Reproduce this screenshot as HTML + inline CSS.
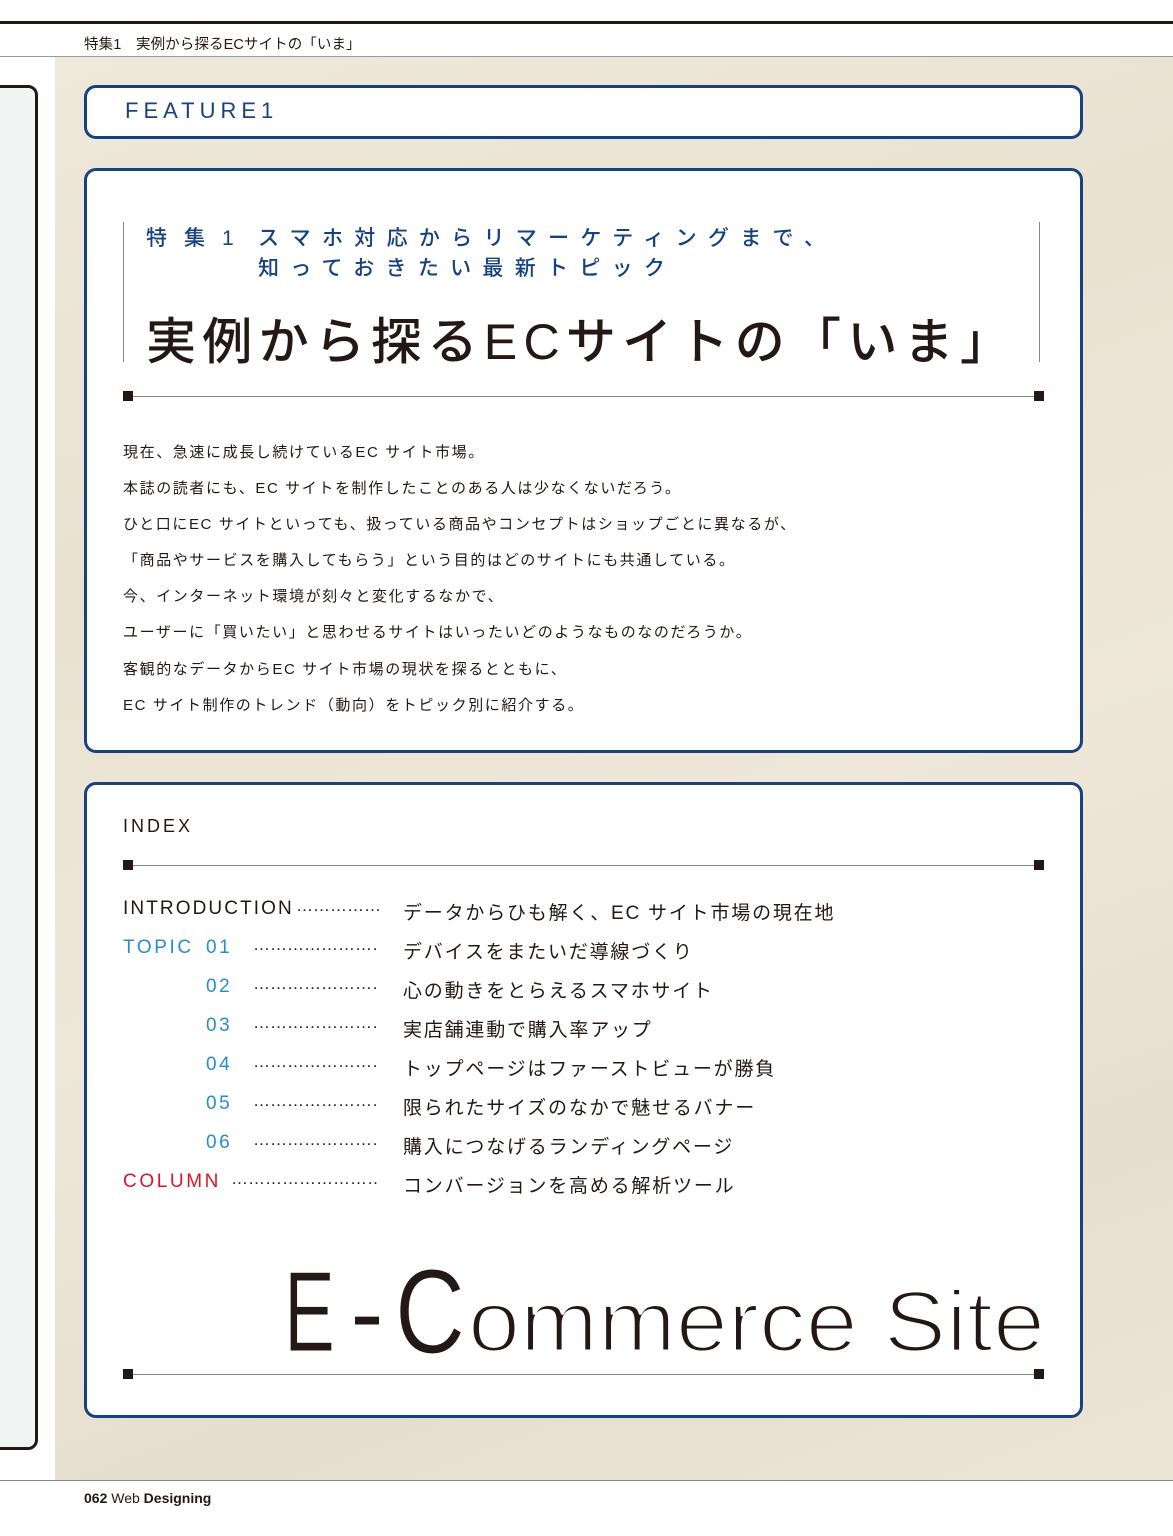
<!DOCTYPE html>
<html><head><meta charset="utf-8">
<style>
*{margin:0;padding:0;box-sizing:border-box}
body{width:1173px;height:1536px;position:relative;background:#fff;font-family:"Liberation Sans","Noto Sans CJK JP",sans-serif;color:#231815;overflow:hidden}
.a{position:absolute;white-space:nowrap}
.tex{position:absolute;left:55px;top:57px;width:1118px;height:1423px;background:linear-gradient(160deg,#efe9dc 0%,#e9e1d0 30%,#efe8da 55%,#e6dece 80%,#ece5d7 100%)}
.box{position:absolute;background:#fff;border:3px solid #17427f;border-radius:12px}
.sq{position:absolute;width:10px;height:10px;background:#231815}
.ln{position:absolute;height:1px;background:#888}
.body{font-size:15px;letter-spacing:1.6px}
.ix{font-size:19px;letter-spacing:1.8px}
.dt{font-size:17px;letter-spacing:0px}
.blue{color:#2a8ccc}
</style></head><body>
<div class="a" style="left:0;top:21px;width:1173px;height:3px;background:#231815"></div>
<div class="a" style="left:84px;top:33px;font-size:14.5px;letter-spacing:0.1px">特集1　実例から探るECサイトの「いま」</div>
<div class="a" style="left:0;top:56px;width:1173px;height:1px;background:#999"></div>
<div class="tex"></div>
<div class="a" style="left:-10px;top:85px;width:48px;height:1365px;background:#f1f5f3;border:3px solid #231815;border-radius:10px"></div>
<div class="a" style="left:0;top:1480px;width:1173px;height:1px;background:#888"></div>
<div class="a" style="left:84px;top:1490px;font-size:14px"><b>062</b> Web <b>Designing</b></div>

<div class="box" style="left:84px;top:85px;width:999px;height:54px"></div>
<div class="a" style="left:125px;top:98px;font-size:22px;letter-spacing:5px;color:#17427f">FEATURE1</div>

<div class="box" style="left:84px;top:168px;width:999px;height:585px"></div>
<div class="a" style="left:123px;top:222px;width:1px;height:140px;background:#888"></div>
<div class="a" style="left:1039px;top:222px;width:1px;height:140px;background:#888"></div>
<div class="a" style="left:146px;top:222px;font-size:21px;letter-spacing:17px;color:#17427f;font-weight:500">特集1</div>
<div class="a" style="left:258px;top:222px;font-size:21px;letter-spacing:11.3px;color:#17427f;font-weight:500">スマホ対応からリマーケティングまで、</div>
<div class="a" style="left:258px;top:252px;font-size:21px;letter-spacing:11.3px;color:#17427f;font-weight:500">知っておきたい最新トピック</div>
<div class="a" style="left:146px;top:302px;font-size:50px;letter-spacing:6.3px;font-weight:500">実例から探るECサイトの「いま」</div>
<div class="ln" style="left:128px;top:396px;width:912px"></div>
<div class="sq" style="left:123px;top:391px"></div><div class="sq" style="left:1034px;top:391px"></div>
<div class="a body" style="left:123px;top:441px">現在、急速に成長し続けているEC サイト市場。</div>
<div class="a body" style="left:123px;top:477px">本誌の読者にも、EC サイトを制作したことのある人は少なくないだろう。</div>
<div class="a body" style="left:123px;top:513px">ひと口にEC サイトといっても、扱っている商品やコンセプトはショップごとに異なるが、</div>
<div class="a body" style="left:123px;top:549px">「商品やサービスを購入してもらう」という目的はどのサイトにも共通している。</div>
<div class="a body" style="left:123px;top:585px">今、インターネット環境が刻々と変化するなかで、</div>
<div class="a body" style="left:123px;top:621px">ユーザーに「買いたい」と思わせるサイトはいったいどのようなものなのだろうか。</div>
<div class="a body" style="left:123px;top:658px">客観的なデータからEC サイト市場の現状を探るとともに、</div>
<div class="a body" style="left:123px;top:694px">EC サイト制作のトレンド（動向）をトピック別に紹介する。</div>

<div class="box" style="left:84px;top:782px;width:999px;height:636px"></div>
<div class="a" style="left:123px;top:816px;font-size:18px;letter-spacing:3px">INDEX</div>
<div class="ln" style="left:128px;top:865px;width:912px"></div>
<div class="sq" style="left:123px;top:860px"></div><div class="sq" style="left:1034px;top:860px"></div>
<div class="a ix" style="left:123px;top:898px;letter-spacing:2.1px">INTRODUCTION</div>
<div class="a ix blue" style="left:123px;top:937px;letter-spacing:2.6px">TOPIC</div>
<div class="a ix blue" style="left:206px;top:937px;letter-spacing:2.6px">01</div>
<div class="a ix blue" style="left:206px;top:976px;letter-spacing:2.6px">02</div>
<div class="a ix blue" style="left:206px;top:1015px;letter-spacing:2.6px">03</div>
<div class="a ix blue" style="left:206px;top:1054px;letter-spacing:2.6px">04</div>
<div class="a ix blue" style="left:206px;top:1093px;letter-spacing:2.6px">05</div>
<div class="a ix blue" style="left:206px;top:1132px;letter-spacing:2.6px">06</div>
<div class="a ix" style="left:123px;top:1171px;color:#d7182a;letter-spacing:2.6px">COLUMN</div>
<div class="a dt" style="left:296px;top:896px;width:83px;overflow:hidden">………………</div>
<div class="a dt" style="left:253px;top:935px;width:126px;overflow:hidden">……………………</div>
<div class="a dt" style="left:253px;top:974px;width:126px;overflow:hidden">……………………</div>
<div class="a dt" style="left:253px;top:1013px;width:126px;overflow:hidden">……………………</div>
<div class="a dt" style="left:253px;top:1052px;width:126px;overflow:hidden">……………………</div>
<div class="a dt" style="left:253px;top:1091px;width:126px;overflow:hidden">……………………</div>
<div class="a dt" style="left:253px;top:1130px;width:126px;overflow:hidden">……………………</div>
<div class="a dt" style="left:231px;top:1169px;width:148px;overflow:hidden">………………………</div>
<div class="a ix" style="left:403px;top:898px">データからひも解く、EC サイト市場の現在地</div>
<div class="a ix" style="left:403px;top:937px">デバイスをまたいだ導線づくり</div>
<div class="a ix" style="left:403px;top:976px">心の動きをとらえるスマホサイト</div>
<div class="a ix" style="left:403px;top:1015px">実店舗連動で購入率アップ</div>
<div class="a ix" style="left:403px;top:1054px">トップページはファーストビューが勝負</div>
<div class="a ix" style="left:403px;top:1093px">限られたサイズのなかで魅せるバナー</div>
<div class="a ix" style="left:403px;top:1132px">購入につなげるランディングページ</div>
<div class="a ix" style="left:403px;top:1171px">コンバージョンを高める解析ツール</div>
<svg class="a" style="left:0;top:0" width="1173" height="1536">
<g font-family="Liberation Sans" fill="#231815" stroke="#fff" stroke-width="1">
<text x="284" y="1351" font-size="114" textLength="51" lengthAdjust="spacingAndGlyphs">E</text>
<text x="350" y="1351" font-size="114" textLength="34" lengthAdjust="spacingAndGlyphs">-</text>
<text x="395" y="1353" font-size="120" textLength="70" lengthAdjust="spacingAndGlyphs">C</text>
</g>
<text x="468" y="1351" font-family="Liberation Sans" font-size="86" fill="#231815" stroke="#fff" stroke-width="3" textLength="577" lengthAdjust="spacingAndGlyphs">ommerce Site</text>
</svg>
<div class="ln" style="left:128px;top:1374px;width:912px"></div>
<div class="sq" style="left:123px;top:1369px"></div><div class="sq" style="left:1034px;top:1369px"></div>
</body></html>
